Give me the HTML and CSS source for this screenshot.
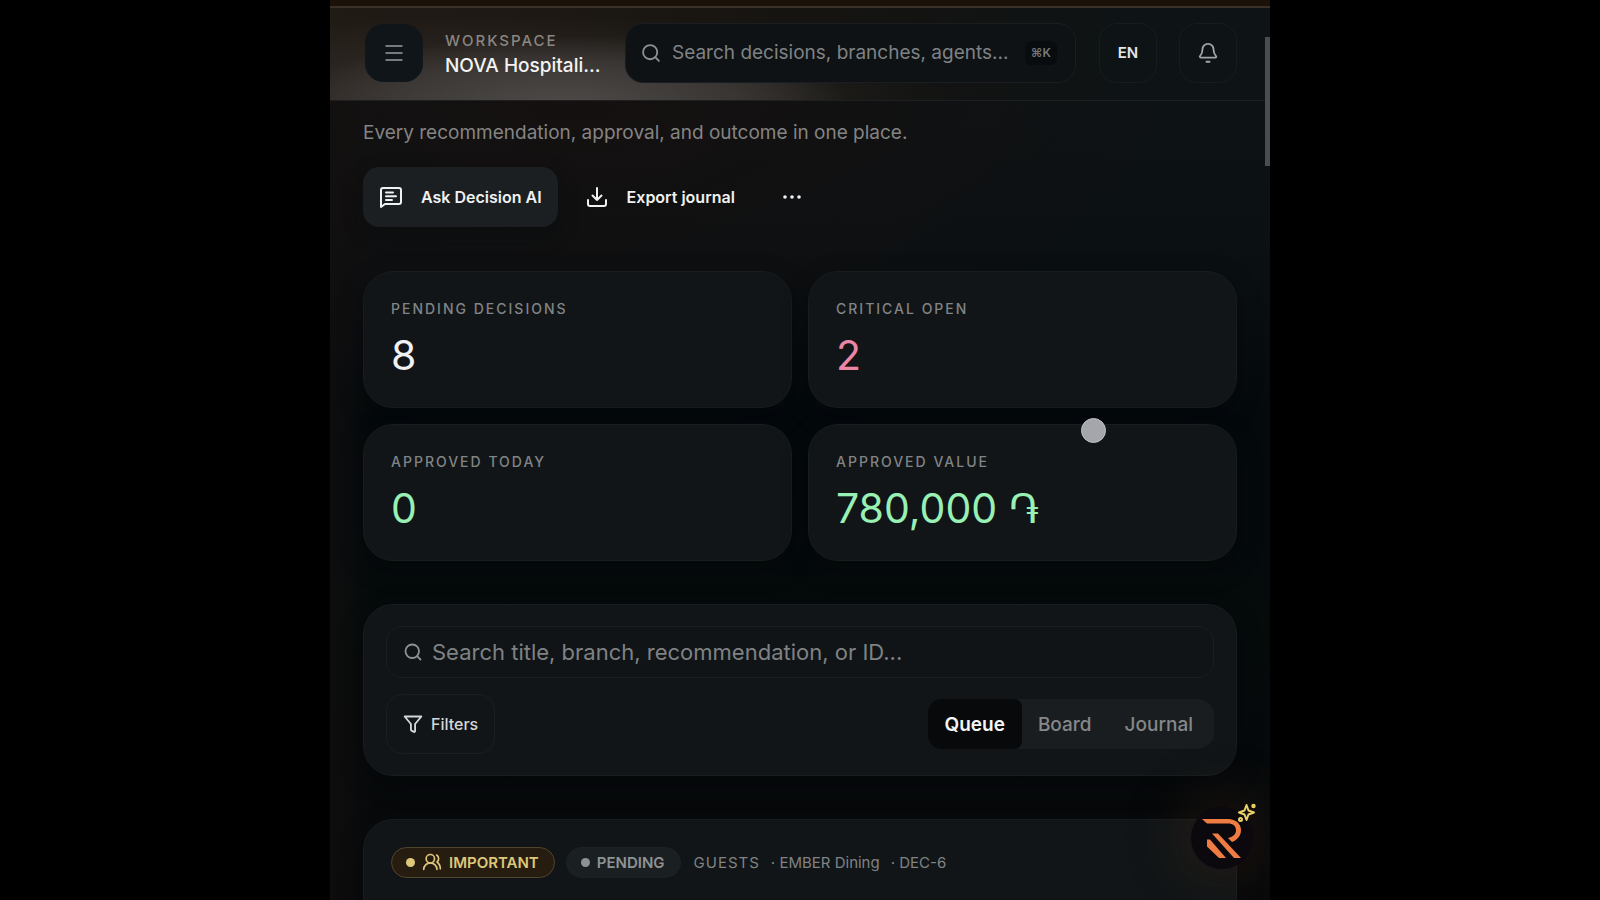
FILE: index.html
```html
<!DOCTYPE html>
<html lang="en">
<head>
<meta charset="utf-8">
<meta name="viewport" content="width=device-width, initial-scale=1">
<title>Decisions</title>
<link rel="stylesheet" href="styles.css">
</head>
<body>
<div class="app">
  <header class="topbar">
    <button class="icon-button menu-button" type="button" aria-label="Menu">
      <svg width="20" height="20" viewBox="0 0 20 20" fill="none" stroke="currentColor" stroke-width="2"><path d="M1.500 3h17M1.500 10h17M1.500 17h17"/></svg>
    </button>
    <div class="workspace">
      <span class="workspace-label">WORKSPACE</span>
      <span class="workspace-name">NOVA Hospitali...</span>
    </div>
    <label class="global-search">
      <svg class="icon" width="20" height="20" viewBox="0 0 24 24" fill="none" stroke="currentColor" stroke-width="2.200" stroke-linecap="round"><circle cx="11" cy="11" r="8.500"/><path d="m21.500 21.500-4.500-4.500"/></svg>
      <input type="text" aria-label="Search" placeholder="Search decisions, branches, agents...">
      <kbd>⌘K</kbd>
    </label>
    <button class="icon-button language" type="button">EN</button>
    <button class="icon-button" type="button" aria-label="Notifications">
      <svg width="22" height="22" viewBox="0 0 24 24" fill="none" stroke="currentColor" stroke-width="2" stroke-linecap="round" stroke-linejoin="round"><path d="M3.300 15.300A1 1 0 0 0 4 17h16a1 1 0 0 0 .740-1.673C19.400 13.960 18 12.500 18 8A6 6 0 0 0 6 8c0 4.500-1.400 5.960-2.740 7.330"/><path d="M10.300 21.500h3.400"/></svg>
    </button>
  </header>

  <main class="content">
    <p class="lead">Every recommendation, approval, and outcome in one place.</p>
    <div class="actions">
      <button class="action primary" type="button">
        <svg width="24" height="24" viewBox="0 0 24 24" fill="none" stroke="currentColor" stroke-width="2" stroke-linecap="round" stroke-linejoin="round"><path d="M5 3h15a2 2 0 0 1 2 2v12a2 2 0 0 1-2 2H6l-4 3V5a2 2 0 0 1 2-2z"/><path d="M7 7.500h7M7 11.200h10M7 15h6"/></svg>
        Ask Decision AI
      </button>
      <button class="action" type="button">
        <svg width="24" height="24" viewBox="0 0 24 24" fill="none" stroke="currentColor" stroke-width="2" stroke-linecap="round" stroke-linejoin="round"><path d="M12 3v12M7.500 10.500 12 15l4.500-4.500M3 15v4a2 2 0 0 0 2 2h14a2 2 0 0 0 2-2v-4"/></svg>
        Export journal
      </button>
      <button class="action more" type="button" aria-label="More">
        <svg width="20" height="20" viewBox="0 0 20 20" fill="currentColor"><circle cx="3" cy="10" r="1.800"/><circle cx="10" cy="10" r="1.800"/><circle cx="17" cy="10" r="1.800"/></svg>
      </button>
    </div>

    <section class="stats">
      <article class="card stat"><h2>PENDING DECISIONS</h2><p>8</p></article>
      <article class="card stat critical"><h2>CRITICAL OPEN</h2><p>2</p></article>
      <article class="card stat positive"><h2>APPROVED TODAY</h2><p>0</p></article>
      <article class="card stat positive"><h2>APPROVED VALUE</h2><p>780,000 ֏</p></article>
    </section>

    <section class="card filter-panel">
      <label class="list-search">
        <svg class="icon" width="18" height="18" viewBox="0 0 24 24" fill="none" stroke="currentColor" stroke-width="2.400" stroke-linecap="round"><circle cx="11" cy="11" r="9"/><path d="m22 22-4.500-4.500"/></svg>
        <input type="text" aria-label="Search decisions" placeholder="Search title, branch, recommendation, or ID...">
      </label>
      <div class="filter-row">
        <button class="filters" type="button">
          <svg width="20" height="20" viewBox="0 0 24 24" fill="none" stroke="currentColor" stroke-width="2.200" stroke-linecap="round" stroke-linejoin="round"><path d="M2 3h20l-7.500 9v8.500c0 .8-.7 1.300-1.400 1L10.300 20a1.500 1.500 0 0 1-.8-1.400V12z"/></svg>
          Filters
        </button>
        <div class="segments">
          <button class="selected" type="button" aria-pressed="true">Queue</button>
          <button type="button" aria-pressed="false">Board</button>
          <button type="button" aria-pressed="false">Journal</button>
        </div>
      </div>
    </section>

    <article class="card decision">
      <span class="pill important">
        <span class="dot"></span>
        <svg width="20" height="20" viewBox="0 0 24 24" fill="none" stroke="currentColor" stroke-width="2" stroke-linecap="round" stroke-linejoin="round"><circle cx="10" cy="8" r="5"/><path d="M18 21a8 8 0 0 0-16 0M22 20c0-3.370-2-6.500-4-8a5 5 0 0 0-.450-8.300"/></svg>
        IMPORTANT
      </span>
      <span class="pill pending"><span class="dot"></span>PENDING</span>
      <span class="department">GUESTS</span>
      <span class="detail">· EMBER Dining</span>
      <span class="detail">· DEC-6</span>
    </article>
  </main>

  <div class="scroll-thumb"></div>
  <div class="pointer"></div>
  <button class="assistant" type="button" aria-label="Assistant">
    <svg class="assistant-logo" width="40" height="40" viewBox="0 0 40 40" fill="#ef7c42"><path d="M0 1H26C34 1 39 6 39 12C39 18 35 22 30 24L26 20C31 19 34 16 34 12.500C34 8 31 5.500 26 5.500H5Z"/><path d="M10 15.500H16L39 40H32ZM5 21.500H8L24 40H17L5 28.500Z"/></svg>
    <svg class="sparkles" width="20" height="20" viewBox="0 0 20 20" fill="none" stroke="#ead267" stroke-width="2" stroke-linejoin="round"><path d="m9.500 2 2 5.500 5.500 2-5.500 2-2 5.500-2-5.500-5.500-2 5.500-2z"/><circle cx="16.500" cy="3" r="1.200"/><circle cx="3.500" cy="16.500" r="1.500"/></svg>
  </button>
</div>
</body>
</html>
```

FILE: styles.css
```css
* { box-sizing: border-box; }

body {
  margin: 0;
  background: #000;
  color: #f0f1f2;
  font-family: Inter, "DejaVu Sans", sans-serif;
}

button, input, kbd { font: inherit; color: inherit; }
button { padding: 0; border: 0; background: none; }
svg { display: block; flex: none; }
h2, p { margin: 0; }

.app {
  position: relative;
  max-width: 940px;
  height: 100vh;
  margin: 0 auto;
  overflow: hidden;
  border-top: 6px solid #1a1209;
  background:
    radial-gradient(ellipse 620px 340px at 240px 60px, #15100f, transparent),
    linear-gradient(90deg, rgba(16, 14, 14, .8), transparent 5%),
    linear-gradient(#0f1416 0, #0b1013 27%, #04090c 46%, #050a0b 70%, #08090b 100%);
}

.topbar {
  display: flex;
  align-items: center;
  height: 95px;
  padding: 0 33px 3px 35px;
  border-top: 2px solid #393229;
  border-bottom: 1px solid #1c2022;
  background:
    radial-gradient(ellipse 280px 64px at 240px 92px, rgba(84, 81, 80, .75), rgba(72, 69, 68, .55) 60%, transparent),
    radial-gradient(ellipse 440px 90px at 180px 96px, rgba(70, 65, 62, .6), transparent),
    linear-gradient(90deg, #211b16, #1a1612 35%, #131311 60%, #0e1315 85%);
}

.icon-button {
  display: grid;
  flex: none;
  place-items: center;
  width: 58px;
  height: 60px;
  border: 1px solid #171c1f;
  border-radius: 18px;
  background: #0e1315;
  color: #a2a5a7;
}

.menu-button {
  height: 58px;
  border-color: #11171a;
  background: #0f1519;
  color: #777b7e;
}

.language {
  margin: 0 22px 0 23px;
  color: #e4e6e7;
  font-size: 15px;
  font-weight: 600;
}

.workspace {
  display: flex;
  flex: none;
  flex-direction: column;
  margin: 0 24px 0 22px;
  line-height: 25px;
}

.workspace-label {
  color: #898683;
  font-size: 15px;
  font-weight: 500;
  letter-spacing: 2px;
}

.workspace-name {
  min-width: 156px;
  color: #f4f3f2;
  font-size: 19px;
  font-weight: 500;
  white-space: nowrap;
}

.global-search, .list-search {
  display: flex;
  align-items: center;
  border: 1px solid #1a1e20;
}

.global-search {
  flex: 1;
  gap: 11px;
  min-width: 0;
  height: 60px;
  padding: 0 18px 0 15px;
  border-radius: 18px;
  background: #0e1215;
  font-size: 19px;
}

.icon { color: #8e9193; }

input {
  flex: 1;
  min-width: 0;
  padding: 0;
  border: 0;
  outline: 0;
  background: none;
}

input::placeholder { color: #7f8284; opacity: 1; }

kbd {
  padding: 0 6px;
  border-radius: 6px;
  background: #090c0f;
  color: #75797b;
  font-size: 12px;
  font-weight: 600;
  line-height: 24px;
}

.content { padding: 16px 33px 0; }

.lead {
  color: #848484;
  font-size: 19px;
  line-height: 32px;
}

.actions {
  display: flex;
  margin: 18px 0 44px;
}

.action {
  display: flex;
  gap: 18px;
  align-items: center;
  height: 60px;
  padding: 0 16px;
  border-radius: 16px;
  font-size: 16px;
  font-weight: 600;
}

.primary {
  margin-right: 11px;
  background: #1b1f21;
  box-shadow: 0 8px 20px rgba(5, 9, 11, .4);
}

.more { margin-left: 15px; }

.card {
  border: 1px solid #171c1f;
  border-radius: 30px;
  background: #111517;
  box-shadow: 0 8px 24px rgba(2, 6, 8, .35);
}

.stats {
  display: grid;
  grid-template-columns: 1fr 1fr;
  gap: 16px;
}

.stat { padding: 25px 27px 26px; }

.stat h2 {
  color: #818486;
  font-size: 14px;
  font-weight: 500;
  letter-spacing: 2px;
  line-height: 24px;
}

.stat p {
  margin-top: 8px;
  font-size: 41px;
  line-height: 52px;
}

.critical p { color: #ec86a7; }
.positive p { color: #98f0b4; }

.filter-panel {
  margin: 43px 0;
  padding: 21px 22px;
}

.list-search {
  gap: 10px;
  height: 52px;
  padding: 0 17px;
  border-radius: 16px;
  background: #101416;
  font-size: 22px;
}

.filter-row {
  display: flex;
  align-items: center;
  justify-content: space-between;
  margin-top: 16px;
}

.filters {
  display: flex;
  gap: 8px;
  align-items: center;
  height: 60px;
  padding: 0 16px;
  border: 1px solid #191e20;
  border-radius: 16px;
  color: #d5d7d8;
  font-size: 16px;
  font-weight: 500;
}

.segments {
  display: flex;
  height: 50px;
  border-radius: 16px;
  background: #1a1d1f;
  color: #85888a;
  font-size: 19px;
  font-weight: 500;
}

.segments button { padding: 0 17px 0 16px; }
.segments button:last-child { padding-right: 21px; }

.segments .selected {
  border-radius: 14px 8px 8px 14px;
  background: #07090b;
  color: #f4f5f5;
  font-weight: 600;
}

.decision {
  display: flex;
  align-items: center;
  height: 120px;
  padding: 0 27px 34px;
  color: #808385;
  font-size: 15px;
}

.pill {
  display: flex;
  gap: 7px;
  align-items: center;
  height: 31px;
  padding: 0 15px 0 14px;
  border: 1px solid #1c2123;
  border-radius: 16px;
  background: #1a1f21;
  font-weight: 600;
}

.important {
  margin-right: 11px;
  border-color: #50452b;
  background: #261d10;
  color: #dfc77a;
}

.pending { margin-right: 13px; color: #8f9294; }

.dot {
  width: 9px;
  height: 9px;
  border-radius: 50%;
  background: currentColor;
}

.department { margin-right: 11px; letter-spacing: 1px; }
.detail { margin-right: 11px; }

.scroll-thumb {
  position: absolute;
  top: 31px;
  right: 0;
  width: 5px;
  height: 129px;
  background: #484d50;
}

.pointer {
  position: absolute;
  top: 412px;
  left: 751px;
  width: 25px;
  height: 25px;
  border: 1px solid #bfc1c5;
  border-radius: 50%;
  background: #a4a6ac;
}

.assistant {
  position: absolute;
  right: 17px;
  bottom: 31px;
  display: grid;
  place-items: center;
  width: 62px;
  height: 62px;
  border-radius: 50%;
  background: #0b090d;
  box-shadow: 0 0 56px 8px rgba(80, 46, 24, .35);
}

.sparkles {
  position: absolute;
  top: -4px;
  right: -4px;
}
```
